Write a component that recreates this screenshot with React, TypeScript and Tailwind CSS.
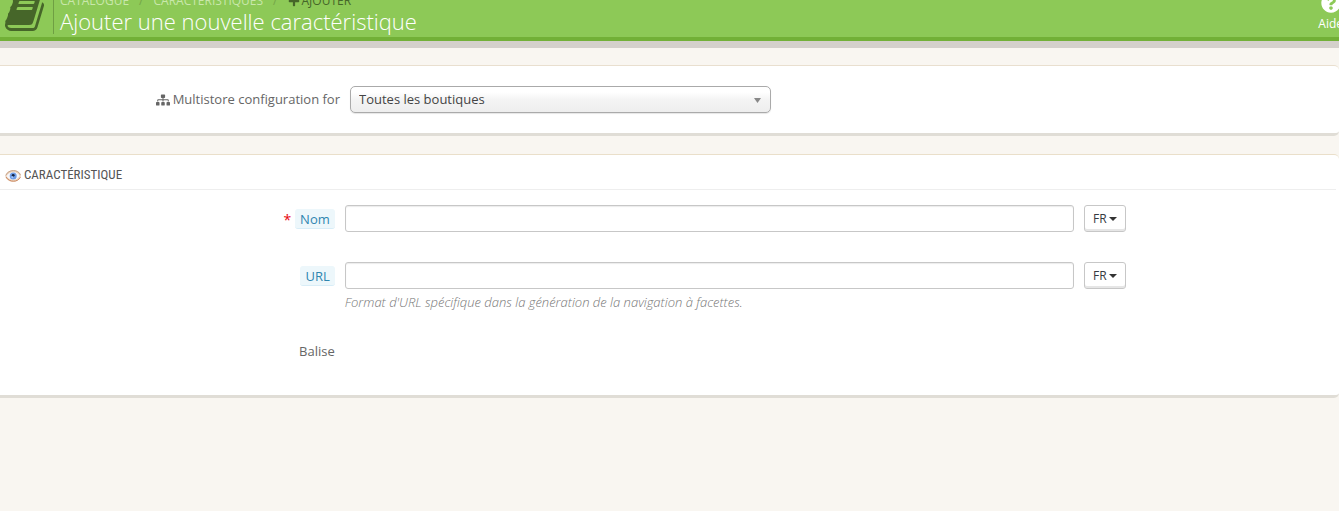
import React, { useState } from 'react';
import { FaPlus, FaQuestionCircle, FaSitemap } from 'react-icons/fa';

const BookIcon = () => (
  <svg className="w-[39px] h-[42px] shrink-0" viewBox="0 0 1664 1792" fill="currentColor" aria-hidden="true">
    <path d="M1639 478q40 57 18 129l-275 906q-19 64-76.5 107.5T1183 1664H260q-77 0-148.5-53.5T12 1479q-24-67-2-127 0-4 3-27t4-37q1-8-3-21.5t-3-19.5q2-11 8-21t16.5-23.5T52 1179q23-38 45-91.5t30-91.5q3-10 .5-30t-.5-28q3-11 17-28t17-23q21-36 42-92t25-90q1-9-2.5-32t.5-28q4-13 22-30.5t22-22.5q19-26 42.5-84.5T340 411q1-8-3-25.5t-2-26.5q2-8 9-18t18-23 17-21q8-12 16.5-30.5t15-35 16-36 19.5-32T469.5 140t36-11.5T553 134l-1 3q38-9 51-9h761q74 0 114 56t18 130l-274 906q-36 119-71.5 153.5T1022 1408H153q-27 0-38 15-11 16-1 43 24 70 144 70h923q29 0 56-15.5t35-41.5l300-987q7-22 5-57 38 15 59 43zm-1064 2q-4 13 2 22.5t20 9.5h608q13 0 25.5-9.5T1247 480l21-64q4-13-2-22.5t-20-9.5H638q-13 0-25.5 9.5T596 416zm-83 256q-4 13 2 22.5t20 9.5h608q13 0 25.5-9.5T1164 736l21-64q4-13-2-22.5t-20-9.5H555q-13 0-25.5 9.5T513 672z" />
  </svg>
);

const EyeIcon = () => (
  <svg className="w-4 h-4 shrink-0" viewBox="0 0 16 16" aria-hidden="true">
    <path d="M0.2 9C1 5.2 4.6 3 8.5 3C12 3 15.4 5.2 16 8.8C15.4 12.4 12 14.8 8.5 14.8C4.4 14.8 1 12.8 0.2 9Z" fill="#ecd5c0" />
    <path d="M0.8 8.4C2.3 5 5.3 3.6 8.5 3.6C11.6 3.6 14.4 5.2 15.4 8" fill="none" stroke="#c7a58c" strokeWidth="1" />
    <path d="M1 10C2.8 13 5.5 14.2 8.5 14.2C11.6 14.2 14 12.8 15.4 10.2" fill="none" stroke="#cc8a63" strokeWidth="1" />
    <path d="M1.6 9C3 6.5 5.5 5.3 8.3 5.3C11.2 5.3 13.6 6.7 14.6 8.9C13.2 11.3 11 12.7 8.3 12.7C5.4 12.7 3 11.5 1.6 9Z" fill="#f7f7fa" />
    <circle cx="8.2" cy="8.9" r="3.5" fill="#6d9be6" />
    <circle cx="8.2" cy="8.3" r="1.4" fill="#17233f" />
    <circle cx="7.4" cy="10.3" r="1" fill="#a9c8f6" />
  </svg>
);

interface FieldProps {
  id: string;
  label: string;
  required?: boolean;
  help?: string;
}

const Field: React.FC<FieldProps> = ({ id, label, required, help }) => {
  const [value, setValue] = useState('');

  return (
    <div className="flex items-start gap-[10px]">
      <div className="w-1/4 h-7 shrink-0 flex items-center justify-end gap-1">
        {required && <span className="text-[14px] text-red-600">*</span>}
        <label
          htmlFor={id}
          className="px-[5px] h-5 leading-5 rounded-[3px] bg-[#edf7fb] border-b border-[#d8edf7] text-[#2f86b0]"
        >
          {label}
        </label>
      </div>
      <div className="w-7/12">
        <div className="flex gap-[10px]">
          <input
            id={id}
            type="text"
            value={value}
            onChange={e => setValue(e.target.value)}
            className="flex-1 min-w-0 h-[27px] px-2 rounded-[3px] border border-[#c7c7c7] bg-white shadow-[inset_0_1px_1px_rgba(0,0,0,0.08)] outline-none"
          />
          <button
            type="button"
            className="w-[42px] h-[27px] shrink-0 flex items-center justify-center gap-[2px] rounded-[3px] border border-[#c7c7c7] bg-white shadow-[inset_0_-2px_0_#e6e6e6] text-[12px] text-[#363a41]"
          >
            FR
            <svg className="w-2 h-1" viewBox="0 0 8 4" fill="#333333" aria-hidden="true">
              <path d="M0 0H8L4 4Z" />
            </svg>
          </button>
        </div>
        {help && <p className="mt-1 leading-[18px] font-light italic text-[#777777]">{help}</p>}
      </div>
    </div>
  );
};

const App: React.FC = () => {
  const [shop, setShop] = useState('all');

  return (
    <div className="min-h-screen overflow-x-hidden bg-[#f9f6f1] font-['Open_Sans',sans-serif] text-[13px] text-[#666666]">
      <header className="h-12 flex items-end justify-between bg-[#8dc957] border-b-[7px] border-[#d4d0cb] shadow-[inset_0_-4px_0_#72b037]">
        <div className="flex items-end pl-[5px] pb-[7px]">
          <span className="text-[#466629]">
            <BookIcon />
          </span>
          <div className="ml-[9px] pl-[6px] border-l border-[#6f9f43]">
            <nav className="flex items-center h-4 leading-4 text-[12px] uppercase text-[#c9e7ab]">
              <a href="#catalogue">Catalogue</a>
              <span className="px-[10px] text-[#75a648]">/</span>
              <a href="#caracteristiques">Caractéristiques</a>
              <span className="px-[10px] text-[#75a648]">/</span>
              <a href="#ajouter" className="flex items-center gap-[2px] text-[#466629]">
                <FaPlus />
                Ajouter
              </a>
            </nav>
            <h1 className="text-[22px] leading-[25px] font-light text-white">Ajouter une nouvelle caractéristique</h1>
          </div>
        </div>
        <a href="#aide" className="-mr-1 pb-[9px] flex flex-col items-center text-[12px] leading-4 text-white">
          <FaQuestionCircle className="w-5 h-5" />
          <span className="mt-[3px]">Aide</span>
        </a>
      </header>

      <section className="mt-[17px] py-5 flex items-center bg-white rounded-r-[5px] border-t border-t-[#e9dfcf] border-b-[3px] border-b-[#e0ddd6]">
        <label htmlFor="shop" className="w-[340px] shrink-0 flex items-center justify-end gap-[3px]">
          <FaSitemap className="w-[14px] h-[14px]" />
          Multistore configuration for
        </label>
        <div className="relative ml-[10px] w-[421px]">
          <select
            id="shop"
            value={shop}
            onChange={e => setShop(e.target.value)}
            className="block w-full h-[27px] pl-2 pr-6 appearance-none rounded-[5px] border border-[#aaaaaa] bg-linear-to-b from-white from-20% via-[#f4f4f4] via-50% to-[#eeeeee] shadow-[0_1px_1px_rgba(0,0,0,0.1)] text-[#444444]"
          >
            <option value="all">Toutes les boutiques</option>
          </select>
          <svg
            className="absolute right-[10px] top-3 w-[7px] h-[5px] pointer-events-none"
            viewBox="0 0 7 5"
            fill="#888888"
            aria-hidden="true"
          >
            <path d="M0 0H7L3.5 5Z" />
          </svg>
        </div>
      </section>

      <section className="mt-[18px] bg-white rounded-r-[5px] border-t border-t-[#eadfca] border-b-[3px] border-b-[#e0ddd6]">
        <h2 className="mr-[3px] pl-[5px] pt-[6px] h-[35px] flex items-center gap-[3px] border-b border-[#eeeeee] font-['Roboto_Condensed',Roboto,sans-serif] text-[13px] uppercase text-[#555555]">
          <EyeIcon />
          Caractéristique
        </h2>
        <form className="pt-[15px] pb-[30px]">
          <div className="flex flex-col gap-[29px]">
            <Field id="name" label="Nom" required />
            <Field id="url" label="URL" help="Format d'URL spécifique dans la génération de la navigation à facettes." />
          </div>
          <div className="mt-[27px] w-1/4 h-[27px] flex items-center justify-end">Balise</div>
        </form>
      </section>
    </div>
  );
};

export default App;
